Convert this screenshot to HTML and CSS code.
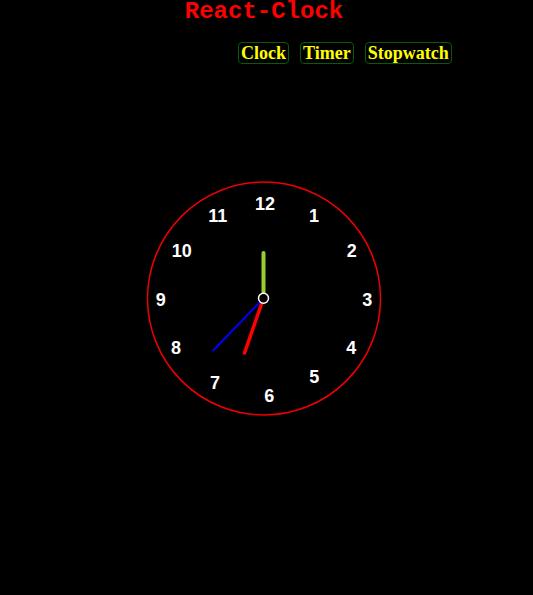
FILE: index.html
```html
<!DOCTYPE html>
<html>
<head>
<meta charset="utf-8">
<link rel="stylesheet" href="styles.css">
</head>
<body>
<div class="app">
  <h1 class="title">React-Clock</h1>
  <nav class="nav">
    <button class="btn">Clock</button>
    <button class="btn">Timer</button>
    <button class="btn">Stopwatch</button>
  </nav>
  <div class="clock-wrap">
    <svg class="clock" width="240" height="240" viewBox="0 0 240 240">
      <circle cx="120" cy="120.5" r="116.5" fill="#000" stroke="#e00" stroke-width="1.5"/>
      <g class="num">
        <text x="121" y="31.8">12</text>
        <text x="170" y="43.5">1</text>
        <text x="207.7" y="79.2">2</text>
        <text x="223.3" y="127.8">3</text>
        <text x="207.3" y="175.8">4</text>
        <text x="170.3" y="205.2">5</text>
        <text x="125.3" y="223.5">6</text>
        <text x="71" y="210.8">7</text>
        <text x="32" y="175.8">8</text>
        <text x="16.7" y="127.8">9</text>
        <text x="37.7" y="79.2">10</text>
        <text x="73.7" y="43.5">11</text>
      </g>
      <line x1="119.5" y1="120.3" x2="119.5" y2="75" stroke="#9acd32" stroke-width="4" stroke-linecap="round"/>
      <line x1="119.5" y1="120.3" x2="100.5" y2="175" stroke="#f00" stroke-width="3.5" stroke-linecap="round"/>
      <line x1="119.5" y1="120.3" x2="68.7" y2="173" stroke="#00f" stroke-width="2"/>
      <circle cx="119.5" cy="120.3" r="5" fill="#000" stroke="#fff" stroke-width="1.5"/>
    </svg>
  </div>
</div>
</body>
</html>
```
FILE: styles.css
```css
html, body {
  margin: 0;
  padding: 0;
  background: #000;
}
.app {
  width: 528px;
  height: 595px;
  display: flex;
  flex-direction: column;
}
.title {
  margin: 0;
  height: 27px;
  text-align: center;
  font-family: "Liberation Mono", "Courier New", monospace;
  font-weight: bold;
  font-size: 24px;
  line-height: 23px;
  color: #f00;
}
.nav {
  display: flex;
  gap: 11px;
  padding-left: 238px;
  margin-top: 15px;
}
.btn {
  height: 22px;
  margin: 0;
  padding: 0 2px;
  border: 1px solid #0a5a0a;
  border-radius: 4px;
  background: #000;
  color: #ff0;
  font-family: "Liberation Serif", "Times New Roman", serif;
  font-weight: bold;
  font-size: 18px;
  line-height: 20px;
}
.clock-wrap {
  display: flex;
  padding-left: 144px;
  margin-top: 114px;
}
.clock {
  display: block;
}
.num text {
  fill: #fff;
  font-family: "Liberation Sans", Arial, sans-serif;
  font-weight: bold;
  font-size: 18px;
  text-anchor: middle;
}
```
